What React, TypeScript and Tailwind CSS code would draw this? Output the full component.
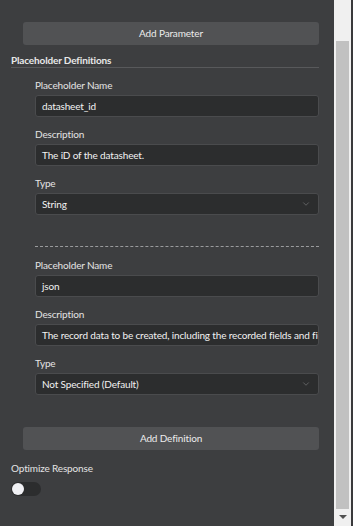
import { ChevronDown } from 'lucide-react';

type Field = { name: string; description: string; type: string };

const fields: Field[] = [
  { name: 'datasheet_id', description: 'The iD of the datasheet.', type: 'String' },
  {
    name: 'json',
    description: 'The record data to be created, including the recorded fields and field values.',
    type: 'Not Specified (Default)',
  },
];

function Label({ children }: { children: React.ReactNode }) {
  return <div className="h-[14px] leading-[14px] text-[10px] text-[#e4e4e4]">{children}</div>;
}

function TextBox({ value }: { value: string }) {
  return (
    <div className="mt-[3px] h-[22px] flex items-center overflow-hidden whitespace-nowrap rounded-[3px] border border-[#4a4b4d] bg-[#2c2d2e] px-[6px] text-[10px] text-[#f2f2f2]">
      {value}
    </div>
  );
}

function SelectBox({ value }: { value: string }) {
  return (
    <div className="mt-[3px] h-[22px] flex items-center justify-between rounded-[3px] border border-[#4a4b4d] bg-[#2c2d2e] pl-[6px] pr-[7px] text-[10px] text-[#f2f2f2]">
      <span>{value}</span>
      <ChevronDown size={10} strokeWidth={1.25} className="text-[#8d8e90]" />
    </div>
  );
}

function DefinitionBlock({ field }: { field: Field }) {
  return (
    <div className="pl-[24px]">
      <Label>Placeholder Name</Label>
      <TextBox value={field.name} />
      <div className="mt-[10px]">
        <Label>Description</Label>
        <TextBox value={field.description} />
      </div>
      <div className="mt-[10px]">
        <Label>Type</Label>
        <SelectBox value={field.type} />
      </div>
    </div>
  );
}

export default function App() {
  return (
    <div className="flex h-[526px] w-[353px] overflow-hidden bg-[#3d3e40] font-['Lato',sans-serif] tracking-[-0.15px]">
      <div className="w-[334px] shrink-0 pl-[11px] pr-[15px] pt-[22px]">
        <button className="ml-[12px] block h-[23px] w-[296px] rounded-[3px] bg-[#515254] text-[10px] text-[#ececec]">
          Add Parameter
        </button>

        {/* Placeholder Definitions */}
        <div className="mt-[8px] border-b border-[#58595b] text-[10px] font-bold leading-[14px] text-[#e8e8e8]">
          Placeholder Definitions
        </div>

        <div className="mt-[10px]">
          <DefinitionBlock field={fields[0]} />
        </div>
        <div className="ml-[24px] mt-[31px] border-t border-dashed border-[#9a9b9d]" />
        <div className="mt-[11px]">
          <DefinitionBlock field={fields[1]} />
        </div>

        <button className="ml-[12px] mt-[32px] block h-[23px] w-[296px] rounded-[3px] bg-[#515254] text-[10px] text-[#ececec]">
          Add Definition
        </button>

        <div className="mt-[11px] h-[14px] leading-[14px] text-[10px] text-[#e4e4e4]">Optimize Response</div>
        <div className="mt-[7px] flex h-[14px] w-[30px] items-center rounded-full bg-[#2c2d2e] px-[1px]">
          <div className="h-[12px] w-[12px] rounded-full bg-[#f1f1f5]" />
        </div>
      </div>

      {/* scrollbar */}
      <div className="relative w-[17px] shrink-0 bg-[#f0f0f0]">
        <div className="absolute left-[2px] top-[41px] h-[468px] w-[13px] bg-[#c1c1c1]" />
        <div className="absolute left-[5px] top-[515px] h-0 w-0 border-x-[4px] border-t-[4px] border-x-transparent border-t-[#505050]" />
      </div>
      <div className="w-[2px] shrink-0 bg-[#3a3a3c]" />
    </div>
  );
}
